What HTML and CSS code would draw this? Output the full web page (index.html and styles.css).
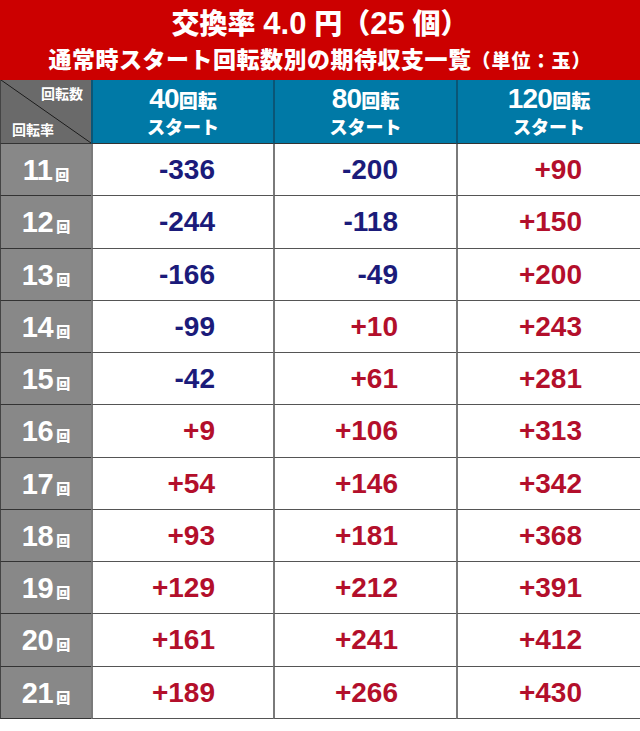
FILE: index.html
```html
<!DOCTYPE html>
<html lang="ja">
<head>
<meta charset="utf-8">
<link rel="stylesheet" href="styles.css">
</head>
<body>
<div class="page">
  <div class="title">
    <div class="t1">交換率 <span class="tn">4.0</span> 円（<span class="tn">25</span> 個）</div>
    <div class="t2">通常時スタート回転数別の期待収支一覧<span class="unit">（単位：玉）</span></div>
  </div>
  <div class="grid">
    <div class="corner"><span class="c-top">回転数</span><span class="c-bot">回転率</span></div>
    <div class="head"><div class="h1"><span class="hn">40</span>回転</div><div class="h2">スタート</div></div>
    <div class="head"><div class="h1"><span class="hn">80</span>回転</div><div class="h2">スタート</div></div>
    <div class="head last"><div class="h1"><span class="hn">120</span>回転</div><div class="h2">スタート</div></div>

    <div class="lab"><span class="ln">11</span><span class="lk">回</span></div>
    <div class="val neg">-336</div><div class="val neg">-200</div><div class="val pos last">+90</div>

    <div class="lab"><span class="ln">12</span><span class="lk">回</span></div>
    <div class="val neg">-244</div><div class="val neg">-118</div><div class="val pos last">+150</div>

    <div class="lab"><span class="ln">13</span><span class="lk">回</span></div>
    <div class="val neg">-166</div><div class="val neg">-49</div><div class="val pos last">+200</div>

    <div class="lab"><span class="ln">14</span><span class="lk">回</span></div>
    <div class="val neg">-99</div><div class="val pos">+10</div><div class="val pos last">+243</div>

    <div class="lab"><span class="ln">15</span><span class="lk">回</span></div>
    <div class="val neg">-42</div><div class="val pos">+61</div><div class="val pos last">+281</div>

    <div class="lab"><span class="ln">16</span><span class="lk">回</span></div>
    <div class="val pos">+9</div><div class="val pos">+106</div><div class="val pos last">+313</div>

    <div class="lab"><span class="ln">17</span><span class="lk">回</span></div>
    <div class="val pos">+54</div><div class="val pos">+146</div><div class="val pos last">+342</div>

    <div class="lab"><span class="ln">18</span><span class="lk">回</span></div>
    <div class="val pos">+93</div><div class="val pos">+181</div><div class="val pos last">+368</div>

    <div class="lab"><span class="ln">19</span><span class="lk">回</span></div>
    <div class="val pos">+129</div><div class="val pos">+212</div><div class="val pos last">+391</div>

    <div class="lab"><span class="ln">20</span><span class="lk">回</span></div>
    <div class="val pos">+161</div><div class="val pos">+241</div><div class="val pos last">+412</div>

    <div class="lab"><span class="ln">21</span><span class="lk">回</span></div>
    <div class="val pos">+189</div><div class="val pos">+266</div><div class="val pos last">+430</div>
  </div>
</div>
</body>
</html>
```

FILE: styles.css
```css
* { box-sizing: border-box; }
html, body { margin: 0; padding: 0; background: #ffffff; }
body {
  width: 640px;
  height: 731px;
  overflow: hidden;
  font-family: "Liberation Sans", "Noto Sans CJK JP", sans-serif;
  font-weight: 700;
}
.page { width: 640px; }

.title {
  height: 80px;
  background: #cc0000;
  color: #ffffff;
  text-align: center;
  padding-top: 5px;
}
.t1 {
  font-size: 28px;
  line-height: 37px;
  font-weight: 900;
}
.tn {
  font-size: 31px;
  font-weight: 700;
}
.t2 {
  font-size: 23px;
  line-height: 34px;
  font-weight: 900;
  letter-spacing: 0.5px;
}
.unit {
  font-size: 19px;
  letter-spacing: 1px;
}

.grid {
  display: grid;
  grid-template-columns: 91px 182px 183px 184px;
  grid-template-rows: 64px repeat(11, 52.27px);
}

.corner {
  background-color: #6a6a6a;
  background-image: linear-gradient(to top right, transparent calc(50% - 0.8px), #1a1a1a 50%, transparent calc(50% + 0.8px));
  border-bottom: 1px solid #333333;
  border-left: 1px solid #444444;
  color: #ffffff;
  font-size: 14px;
  line-height: 16px;
  display: flex;
  flex-direction: column;
  justify-content: space-between;
  padding: 6px 8px 5px 11px;
}
.c-top { align-self: flex-end; }
.c-bot { align-self: flex-start; }

.head {
  background: #0079a6;
  color: #ffffff;
  border-left: 2px solid #0a5677;
  border-bottom: 1px solid #333333;
  display: flex;
  flex-direction: column;
  align-items: center;
  justify-content: center;
  padding-top: 1px;
}
.h1 {
  font-size: 19px;
  line-height: 27px;
  font-weight: 900;
}
.hn {
  font-size: 28px;
  font-weight: 700;
  letter-spacing: -0.8px;
}
.h2 {
  font-size: 18px;
  line-height: 24px;
  font-weight: 900;
  margin-top: 1px;
}

.lab {
  background: #888888;
  color: #ffffff;
  border-left: 1px solid #444444;
  border-bottom: 1px solid #333333;
  display: flex;
  align-items: baseline;
  justify-content: center;
  padding-top: 10px;
  gap: 3px;
}
.ln {
  font-size: 29px;
  line-height: 32px;
  letter-spacing: -0.5px;
}
.lk {
  font-size: 14px;
  font-weight: 900;
}

.val {
  border-left: 2px solid #7a7a7a;
  border-bottom: 1px solid #555555;
  font-size: 28px;
  line-height: 51px;
  text-align: right;
  padding-right: 58px;
}
.neg { color: #1b1b7a; }
.pos { color: #b30f2b; }
```
